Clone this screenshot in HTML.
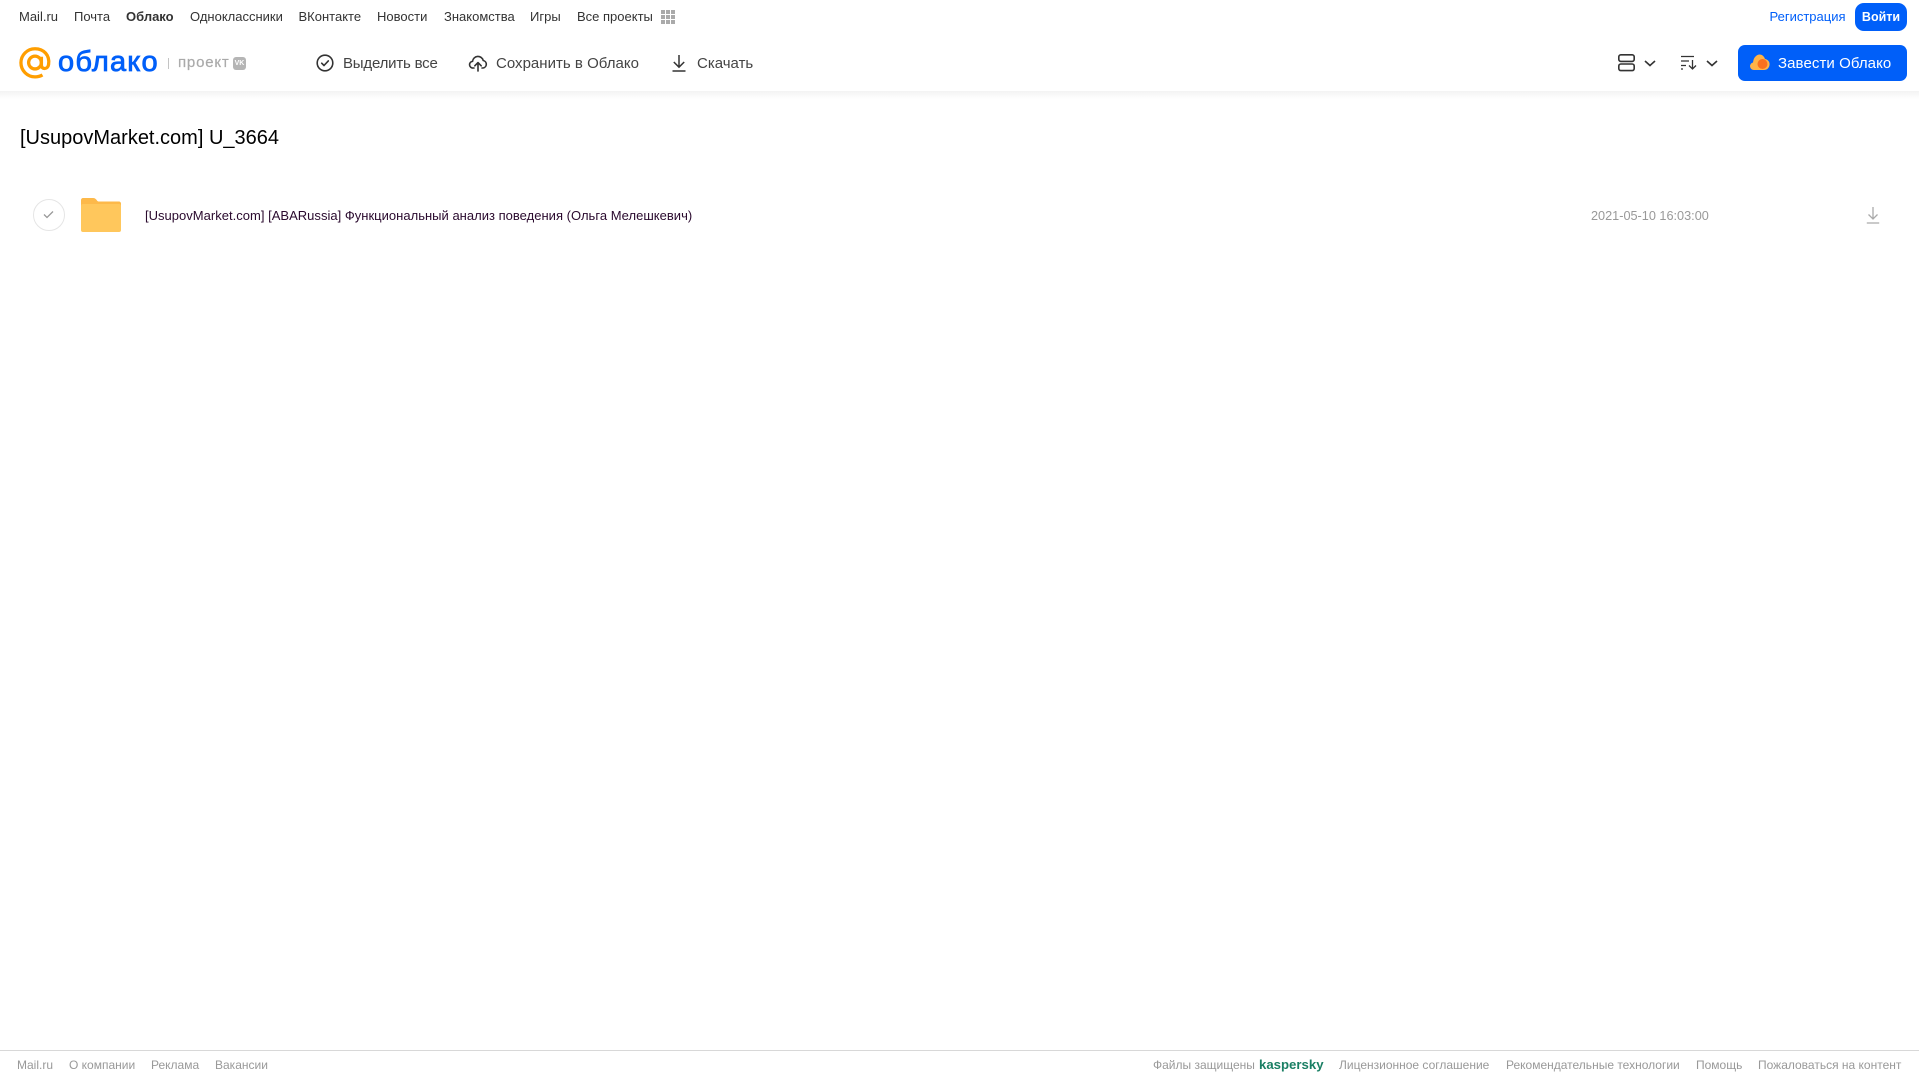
<!DOCTYPE html>
<html lang="ru">
<head>
<meta charset="utf-8">
<title>Облако</title>
<style>
html,body{margin:0;padding:0;background:#fff;}
body{position:relative;width:1919px;height:1079px;overflow:hidden;font-family:"Liberation Sans",Arial,sans-serif;}
.t{position:absolute;white-space:nowrap;line-height:16px;}
.n{top:9px;font-size:13px;color:#333;}
.b{top:55.500px;font-size:15px;color:#444;}
.f{top:1057px;font-size:12px;color:#999;}
svg{position:absolute;overflow:visible;}
</style>
</head>
<body>
<span class="t n" style="left:19px">Mail.ru</span>
<span class="t n" style="left:74px">Почта</span>
<span class="t n" style="left:126px;font-weight:bold">Облако</span>
<span class="t n" style="left:190px">Одноклассники</span>
<span class="t n" style="left:298.500px">ВКонтакте</span>
<span class="t n" style="left:377px">Новости</span>
<span class="t n" style="left:444px">Знакомства</span>
<span class="t n" style="left:530px">Игры</span>
<span class="t n" style="left:577px">Все проекты</span>
<svg style="left:661px;top:10px" width="14" height="14" fill="#aaa"><rect x="0" y="0" width="4" height="4"/><rect x="5" y="0" width="4" height="4"/><rect x="10" y="0" width="4" height="4"/><rect x="0" y="5" width="4" height="4"/><rect x="5" y="5" width="4" height="4"/><rect x="10" y="5" width="4" height="4"/><rect x="0" y="10" width="4" height="4"/><rect x="5" y="10" width="4" height="4"/><rect x="10" y="10" width="4" height="4"/></svg>

<span class="t n" style="left:1769.500px;color:#005ff9">Регистрация</span>
<div style="position:absolute;left:1855px;top:3px;width:52px;height:28px;border-radius:9px;background:#005ff9;color:#fff;font-size:12.500px;font-weight:bold;line-height:28px;text-align:center">Войти</div>

<!-- logo -->
<svg style="left:19px;top:47px" width="32" height="32" viewBox="0 0 33 33" fill="none" stroke="#ff9e00" stroke-width="3.400"><circle cx="16.500" cy="16" r="6.600"/><path d="M23.100 10v8.500c0 5 6.600 5 7.400-.5C32 8.500 25.500 1.800 16.500 1.800 8.500 1.800 2 8.300 2 16.300s6.500 14.500 14.500 14.500c3 0 5.500-.7 7.700-2"/></svg>
<span class="t" style="left:58px;top:43.500px;font-size:29px;line-height:36px;color:#005ff9;letter-spacing:1.200px;-webkit-text-stroke:.8px #005ff9">облако</span>
<div style="position:absolute;left:168px;top:58px;width:1px;height:11px;background:#c4c4c4"></div>
<span class="t" style="left:178px;top:55px;font-size:15px;color:#aaa;letter-spacing:.8px;-webkit-text-stroke:.2px #aaa">проект</span>
<div style="position:absolute;left:233px;top:57px;width:13px;height:13px;border-radius:3px;background:#b5b5b5;color:#fff;font-size:7px;font-weight:bold;line-height:13px;text-align:center">VK</div>

<!-- toolbar -->
<svg style="left:316px;top:54px" width="18" height="18" viewBox="0 0 18 18" fill="none" stroke="#333" stroke-width="1.600"><circle cx="9" cy="9" r="7.800"/><path d="M5.700 9.200l2.300 2.300 4.300-4.600" stroke-linecap="round" stroke-linejoin="round"/></svg>
<span class="t b" style="left:343px;letter-spacing:-.2px">Выделить все</span>
<svg style="left:469px;top:53px" width="18" height="18" viewBox="0 0 18 18" fill="none" stroke="#333" stroke-width="1.600" stroke-linecap="round" stroke-linejoin="round"><path d="M5 15H4.200A3.300 3.300 0 0 1 3.600 8.300 5.400 5.400 0 0 1 14.200 7.500 3.800 3.800 0 0 1 14 15H13"/><path d="M9 18V10M5.800 12.800L9 9.600l3.200 3.200"/></svg>
<span class="t b" style="left:496px;letter-spacing:.02px">Сохранить в Облако</span>
<svg style="left:671px;top:54px" width="16" height="18" viewBox="0 0 16 18" fill="none" stroke="#333" stroke-width="1.500"><path d="M8 1v12M2.800 8L8 13.200 13.200 8M1.500 17h13"/></svg>
<span class="t b" style="left:697px">Скачать</span>

<svg style="left:1618px;top:54px" width="17" height="18" viewBox="0 0 17 18" fill="none" stroke="#333" stroke-width="1.600"><rect x=".8" y=".8" width="15.400" height="6.600" rx="2"/><rect x=".8" y="10" width="15.400" height="6.600" rx="2"/></svg>
<svg style="left:1644px;top:60px" width="12" height="7" viewBox="0 0 12 7" fill="none" stroke="#333" stroke-width="1.600"><path d="M1 1l5 4.500L11 1"/></svg>
<svg style="left:1681px;top:55px" width="16" height="15" viewBox="0 0 16 15" fill="none" stroke="#333" stroke-width="1.300"><path d="M0 1.500h13M0 6h8M0 10.500h5M0 14h2"/><path d="M11.500 5v9M8 10.500l3.500 3.500 3.500-3.500"/></svg>
<svg style="left:1706px;top:60px" width="12" height="7" viewBox="0 0 12 7" fill="none" stroke="#333" stroke-width="1.600"><path d="M1 1l5 4.500L11 1"/></svg>

<div style="position:absolute;left:1738px;top:45px;width:169px;height:36px;border-radius:7px;background:#005ff9"></div>
<svg style="left:1750px;top:54px" width="20" height="17" viewBox="0 0 20 17"><path d="M4 16a3.800 3.800 0 0 1-1-7.500C3.500 3 7 .5 9.500.5c3 0 5 2.500 5.500 4.500 3 .5 5 3 4.500 6-.4 3-2.500 5-5.500 5z" fill="#ffb347"/><circle cx="12.500" cy="10" r="5" fill="#f9701e"/></svg>
<span class="t b" style="left:1778px;color:#fff;letter-spacing:.08px">Завести Облако</span>

<!-- header shadow -->
<div style="position:absolute;left:0;top:91px;width:1919px;height:8px;background:linear-gradient(#f3f3f3,#fff)"></div>

<span class="t" style="left:20px;top:124px;font-size:20px;line-height:28px;color:#000;">[UsupovMarket.com] U_3664</span>

<!-- row -->
<div style="position:absolute;left:33px;top:199px;width:30px;height:30px;border:1px solid #e5e5e5;border-radius:50%"></div>
<svg style="left:43px;top:210px" width="11" height="9" viewBox="0 0 11 9" fill="none" stroke="#999" stroke-width="1.300"><path d="M1 4.500l3 3 6-6"/></svg>
<svg style="left:81px;top:198px" width="40" height="34" viewBox="0 0 40 34"><path d="M2 0h10c2 0 3 1 4 2.500 .5 .8 1 1 2 1h20c1.100 0 2 .9 2 2V8H0V2C0 .9.900 0 2 0z" fill="#fdb94a"/><rect x="0" y="6" width="40" height="28" rx="2" fill="#ffc75c"/></svg>
<span class="t" style="left:145px;top:208px;font-size:13px;letter-spacing:.015px;color:#2a0a2e">[UsupovMarket.com] [ABARussia] Функциональный анализ поведения (Ольга Мелешкевич)</span>
<span class="t" style="left:1591px;top:208px;font-size:12.700px;color:#999">2021-05-10 16:03:00</span>
<svg style="left:1866px;top:206px" width="14" height="18" viewBox="0 0 14 18" fill="none" stroke="#aaa" stroke-width="1.300"><path d="M7 1v12M2.500 8.500L7 13l4.500-4.500M.8 17h12.400"/></svg>

<!-- footer -->
<div style="position:absolute;left:0;top:1050px;width:1919px;height:1px;background:#d8d8d8"></div>
<span class="t f" style="left:17px">Mail.ru</span>
<span class="t f" style="left:69px">О компании</span>
<span class="t f" style="left:151px">Реклама</span>
<span class="t f" style="left:215px">Вакансии</span>
<span class="t f" style="left:1153px">Файлы защищены</span>
<span class="t f" style="left:1259px;font-weight:bold;color:#1a7f64;font-size:13.200px">kaspersky</span>
<span class="t f" style="left:1339px">Лицензионное соглашение</span>
<span class="t f" style="left:1506px">Рекомендательные технологии</span>
<span class="t f" style="left:1696px">Помощь</span>
<span class="t f" style="left:1758px">Пожаловаться на контент</span>
</body>
</html>
